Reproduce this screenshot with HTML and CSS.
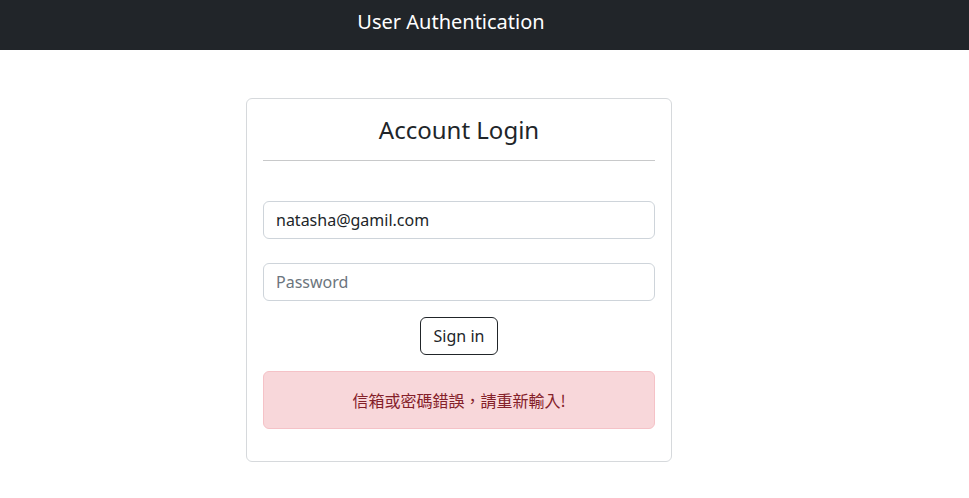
FILE: index.html
```html
<!DOCTYPE html>
<html lang="zh-Hant">
<head>
<meta charset="utf-8">
<title>User Authentication</title>
<link rel="stylesheet" href="styles.css">
</head>
<body>
  <nav class="navbar">
    <div class="navbar-inner">
      <span class="brand">User Authentication</span>
    </div>
  </nav>
  <main class="main">
    <section class="card">
      <h4 class="card-title">Account Login</h4>
      <hr class="divider">
      <form class="form">
        <input class="field" type="email" value="natasha@gamil.com">
        <input class="field field-gap" type="password" placeholder="Password">
        <div class="actions">
          <button type="button" class="btn">Sign in</button>
        </div>
        <div class="alert">信箱或密碼錯誤，請重新輸入!</div>
      </form>
    </section>
  </main>
</body>
</html>
```

FILE: styles.css
```css
* { box-sizing: border-box; }
html, body { margin: 0; padding: 0; background: #fff; }
body {
  font-family: "Noto Sans", "Noto Sans CJK TC", sans-serif;
  color: #212529;
  font-size: 16px;
}
.navbar {
  height: 50px;
  background: #212529;
}
.navbar-inner {
  margin-left: 246px;
  width: 410px;
  display: flex;
  justify-content: center;
  padding-top: 7px;
}
.brand {
  color: #fff;
  font-size: 20px;
  line-height: 30px;
}
.main {
  padding-top: 48px;
  padding-left: 246px;
}
.card {
  width: 426px;
  border: 1px solid #d6d9dc;
  border-radius: 6px;
  padding: 16px 16px 16px;
}
.card-title {
  margin: 0;
  font-size: 24px;
  font-weight: 400;
  line-height: 29px;
  text-align: center;
}
.divider {
  margin: 16px 0 0;
  border: 0;
  border-top: 1px solid #c8c9ca;
}
.form {
  padding-top: 40px;
  display: flex;
  flex-direction: column;
}
.field {
  height: 38px;
  width: 100%;
  border: 1px solid #ced4da;
  border-radius: 6px;
  padding: 6px 12px;
  font: inherit;
  font-size: 16px;
  color: #212529;
  outline: none;
}
.field::placeholder { color: #6c757d; }
.field-gap { margin-top: 24px; }
.actions {
  display: flex;
  justify-content: center;
  margin-top: 16px;
}
.btn {
  height: 38px;
  border: 1px solid #212529;
  border-radius: 6px;
  background: #fff;
  color: #212529;
  font: inherit;
  font-size: 16px;
  padding: 6px 13px;
}
.alert {
  margin-top: 16px;
  margin-bottom: 16px;
  background: #f8d7da;
  border: 1px solid #f5c2c7;
  color: #842029;
  border-radius: 6px;
  padding: 16px;
  line-height: 24px;
  text-align: center;
  font-family: "Noto Sans CJK TC", sans-serif;
}
```
